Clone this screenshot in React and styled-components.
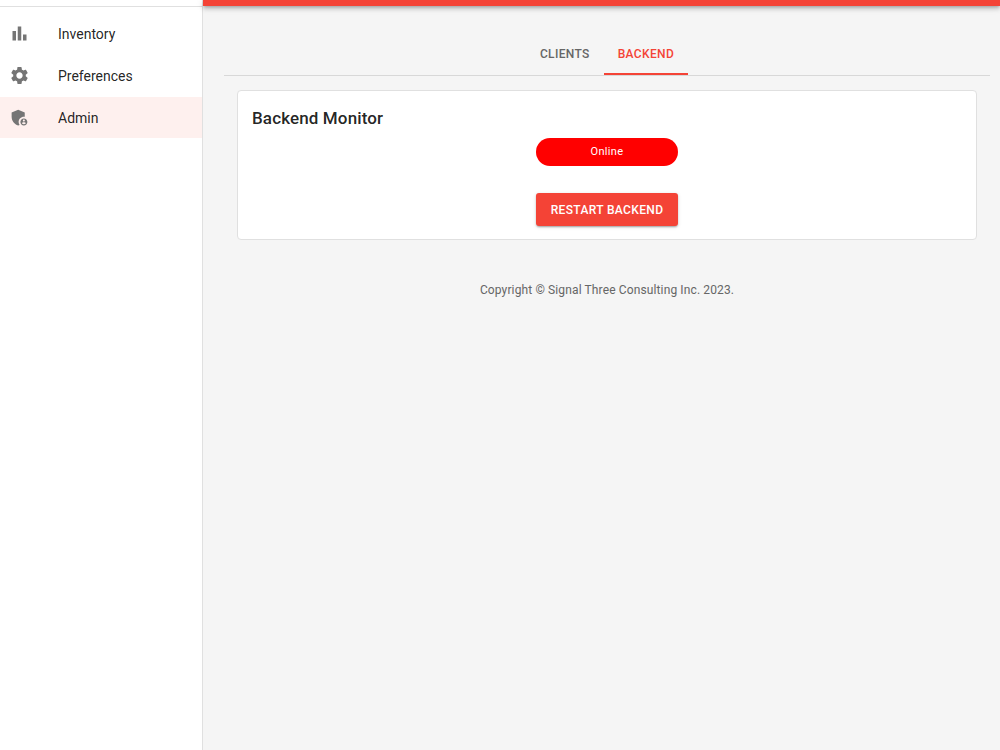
import React from "react";
import styled, { createGlobalStyle } from "styled-components";
import { MdSettings, MdAdminPanelSettings } from "react-icons/md";

const GlobalStyle = createGlobalStyle`
  *, *::before, *::after { box-sizing: border-box; }
  body {
    margin: 0;
    background: #f5f5f5;
    color: rgba(0, 0, 0, 0.87);
    font-family: Roboto, "Liberation Sans", sans-serif;
    font-size: 14px;
  }
`;

const Shell = styled.div`
  display: flex;
  min-height: 100vh;
`;

const Sidebar = styled.aside`
  flex: 0 0 203px;
  background: #fff;
  border-right: 1px solid #e0e0e0;
`;

const SidebarHeader = styled.div`
  height: 7px;
  border-bottom: 1px solid #e0e0e0;
`;

const NavList = styled.nav`
  display: flex;
  flex-direction: column;
  gap: 1px;
  padding-top: 6px;
`;

const NavItem = styled.a`
  display: flex;
  align-items: center;
  gap: 28px;
  height: 41px;
  padding: 0 9px;
  background: ${(p) => (p.$selected ? "#fef0ee" : "transparent")};
  color: inherit;
  line-height: 20px;
  text-decoration: none;

  svg {
    flex: none;
    width: 21px;
    height: 21px;
    fill: #757575;
  }
`;

const Content = styled.div`
  flex: 1;
  min-width: 0;
`;

const TopBar = styled.header`
  height: 6px;
  background: #f44336;
  box-shadow: 0 2px 3px -1px rgba(0, 0, 0, 0.2), 0 3px 4px rgba(0, 0, 0, 0.14),
    0 1px 9px rgba(0, 0, 0, 0.12);
`;

const Main = styled.main`
  padding: 27px 10px 0 21px;
`;

const Tabs = styled.div`
  display: flex;
  justify-content: center;
  border-bottom: 1px solid #d8d8d8;
`;

const Tab = styled.button`
  height: 42px;
  padding: 0 14px;
  border: 0;
  border-top: 2px solid transparent;
  border-bottom: 2px solid ${(p) => (p.$selected ? "#f44336" : "transparent")};
  background: none;
  color: ${(p) => (p.$selected ? "#f44336" : "#666")};
  font: 500 12px/20px Roboto, "Liberation Sans", sans-serif;
  letter-spacing: 0.02857em;
  text-transform: uppercase;
  cursor: pointer;
`;

const Card = styled.section`
  display: flex;
  flex-direction: column;
  margin: 14px 13px 0;
  padding: 14px 14px 13px;
  border: 1px solid #e0e0e0;
  border-radius: 4px;
  background: #fff;
`;

const CardTitle = styled.h2`
  margin: 0 0 6px;
  font-size: 17px;
  font-weight: 500;
  line-height: 27px;
  letter-spacing: 0.0075em;
`;

const Controls = styled.div`
  display: grid;
  gap: 27px;
  align-self: center;
`;

const StatusPill = styled.div`
  border-radius: 14px;
  background: #f00;
  color: #fff;
  font-size: 11px;
  line-height: 28px;
  text-align: center;
  letter-spacing: 0.02857em;
`;

const ActionButton = styled.button`
  height: 33px;
  padding: 0 15px;
  border: 0;
  border-radius: 3px;
  background: #f44336;
  box-shadow: 0 2px 2px -1px rgba(0, 0, 0, 0.2), 0 1px 2px rgba(0, 0, 0, 0.14),
    0 1px 4px rgba(0, 0, 0, 0.12);
  color: #fff;
  font: 500 12px/20px Roboto, "Liberation Sans", sans-serif;
  letter-spacing: 0.02857em;
  text-transform: uppercase;
  cursor: pointer;
`;

const Footer = styled.footer`
  padding: 41px 0 16px;
  color: #666;
  font-size: 12px;
  line-height: 18px;
  text-align: center;
  letter-spacing: 0.01071em;
`;

function BarChartIcon() {
  return (
    <svg viewBox="0 0 24 24" aria-hidden="true">
      <path d="M4 9h4v11H4zm12 4h4v7h-4zm-6-9h4v16h-4z" />
    </svg>
  );
}

const navItems = [
  { label: "Inventory", Icon: BarChartIcon },
  { label: "Preferences", Icon: MdSettings },
  { label: "Admin", Icon: MdAdminPanelSettings, selected: true },
];

export default function App() {
  return (
    <>
      <GlobalStyle />
      <Shell>
        <Sidebar>
          <SidebarHeader />
          <NavList>
            {navItems.map(({ label, Icon, selected }) => (
              <NavItem
                key={label}
                href={`#${label.toLowerCase()}`}
                $selected={selected}
                aria-current={selected ? "page" : undefined}
              >
                <Icon />
                <span>{label}</span>
              </NavItem>
            ))}
          </NavList>
        </Sidebar>
        <Content>
          <TopBar />
          <Main>
            <Tabs role="tablist">
              <Tab type="button" role="tab" aria-selected="false">Clients</Tab>
              <Tab type="button" role="tab" aria-selected="true" $selected>Backend</Tab>
            </Tabs>
            <Card>
              <CardTitle>Backend Monitor</CardTitle>
              <Controls>
                <StatusPill role="status">Online</StatusPill>
                <ActionButton type="button">Restart Backend</ActionButton>
              </Controls>
            </Card>
            <Footer>Copyright © Signal Three Consulting Inc. 2023.</Footer>
          </Main>
        </Content>
      </Shell>
    </>
  );
}
